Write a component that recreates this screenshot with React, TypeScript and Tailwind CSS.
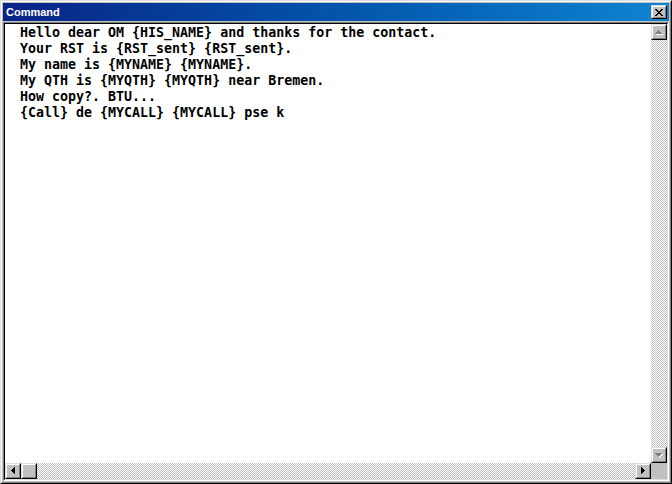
import React from "react";

const lines = [
  "Hello dear OM {HIS_NAME} and thanks for the contact.",
  "Your RST is {RST_sent} {RST_sent}.",
  "My name is {MYNAME} {MYNAME}.",
  "My QTH is {MYQTH} {MYQTH} near Bremen.",
  "How copy?. BTU...",
  "{Call} de {MYCALL} {MYCALL} pse k",
];

function Raised({ children, className = "" }: { children?: React.ReactNode; className?: string }) {
  return (
    <div className={"box-border border border-t-[#dfdfdf] border-l-[#dfdfdf] border-r-black border-b-black bg-[#c0c0c0] " + className}>
      <div className="box-border w-full h-full border border-t-white border-l-white border-r-[#808080] border-b-[#808080] flex items-center justify-center">
        {children}
      </div>
    </div>
  );
}

function Arrow({ dir, disabled }: { dir: "up" | "down" | "left" | "right"; disabled?: boolean }) {
  const pts: Record<string, string> = {
    up: "3.5,0 7,4 0,4",
    down: "0,0 7,0 3.5,4",
    left: "4,0 4,7 0,3.5",
    right: "0,0 4,3.5 0,7",
  };
  const vertical = dir === "up" || dir === "down";
  const w = vertical ? 7 : 4;
  const h = vertical ? 4 : 7;
  return (
    <svg width={w + 1} height={h + 1} viewBox={`0 0 ${w + 1} ${h + 1}`} shapeRendering="crispEdges">
      {disabled && <polygon points={pts[dir]} fill="#ffffff" transform="translate(1,1)" />}
      <polygon points={pts[dir]} fill={disabled ? "#808080" : "#000000"} />
    </svg>
  );
}

function CloseGlyph() {
  const rows = ["XX....XX", ".XX..XX.", "..XXXX..", "...XX...", "..XXXX..", ".XX..XX.", "XX....XX"];
  const rects: React.ReactNode[] = [];
  rows.forEach((r, y) =>
    r.split("").forEach((c, x) => {
      if (c === "X") rects.push(<rect key={`${x}-${y}`} x={x} y={y} width={1} height={1} fill="#000" />);
    })
  );
  return (
    <svg width={8} height={7} viewBox="0 0 8 7" shapeRendering="crispEdges">
      {rects}
    </svg>
  );
}

const checker =
  "bg-[image:repeating-conic-gradient(#c0c0c0_0%_25%,#ffffff_0%_50%)] bg-[length:2px_2px]";

export default function App() {
  return (
    <div className="w-[672px] h-[484px] box-border border border-t-[#dfdfdf] border-l-[#dfdfdf] border-r-black border-b-black">
      <div className="box-border h-full border border-t-white border-l-white border-r-[#808080] border-b-[#808080] bg-[#c0c0c0] p-px flex flex-col">
        {/* Title bar */}
        <div className="h-[18px] shrink-0 flex items-center justify-between bg-gradient-to-r from-[#0a2286] to-[#1084d0] pl-[3px] pr-[2px]">
          <span className="text-white font-bold text-[11px] leading-[18px] font-['Liberation_Sans',Arial,sans-serif]">
            Command
          </span>
          <Raised className="w-[16px] h-[14px]">
            <CloseGlyph />
          </Raised>
        </div>
        {/* Client edge */}
        <div className="mt-px flex-1 min-h-0 box-border border border-t-[#808080] border-l-[#808080] border-r-white border-b-white">
          <div className="box-border h-full border border-t-black border-l-black border-r-[#dfdfdf] border-b-[#dfdfdf] grid grid-cols-[1fr_16px] grid-rows-[1fr_16px]">
            {/* Text area */}
            <div className="bg-white overflow-hidden pl-[15px] pt-px font-['DejaVu_Sans_Mono',monospace] font-bold text-[13.3px] leading-[16px] text-black whitespace-pre">
              {lines.map((l, i) => (
                <div key={i}>{l}</div>
              ))}
            </div>
            {/* Vertical scrollbar */}
            <div className="flex flex-col">
              <Raised className="w-[16px] h-[16px] shrink-0">
                <Arrow dir="up" disabled />
              </Raised>
              <div className={"flex-1 " + checker} />
              <Raised className="w-[16px] h-[16px] shrink-0">
                <Arrow dir="down" disabled />
              </Raised>
            </div>
            {/* Horizontal scrollbar */}
            <div className="flex">
              <Raised className="w-[16px] h-[16px] shrink-0">
                <Arrow dir="left" />
              </Raised>
              <Raised className="w-[16px] h-[16px] shrink-0" />
              <div className={"flex-1 " + checker} />
              <Raised className="w-[16px] h-[16px] shrink-0">
                <Arrow dir="right" />
              </Raised>
            </div>
            <div className="bg-[#c0c0c0]" />
          </div>
        </div>
      </div>
    </div>
  );
}
